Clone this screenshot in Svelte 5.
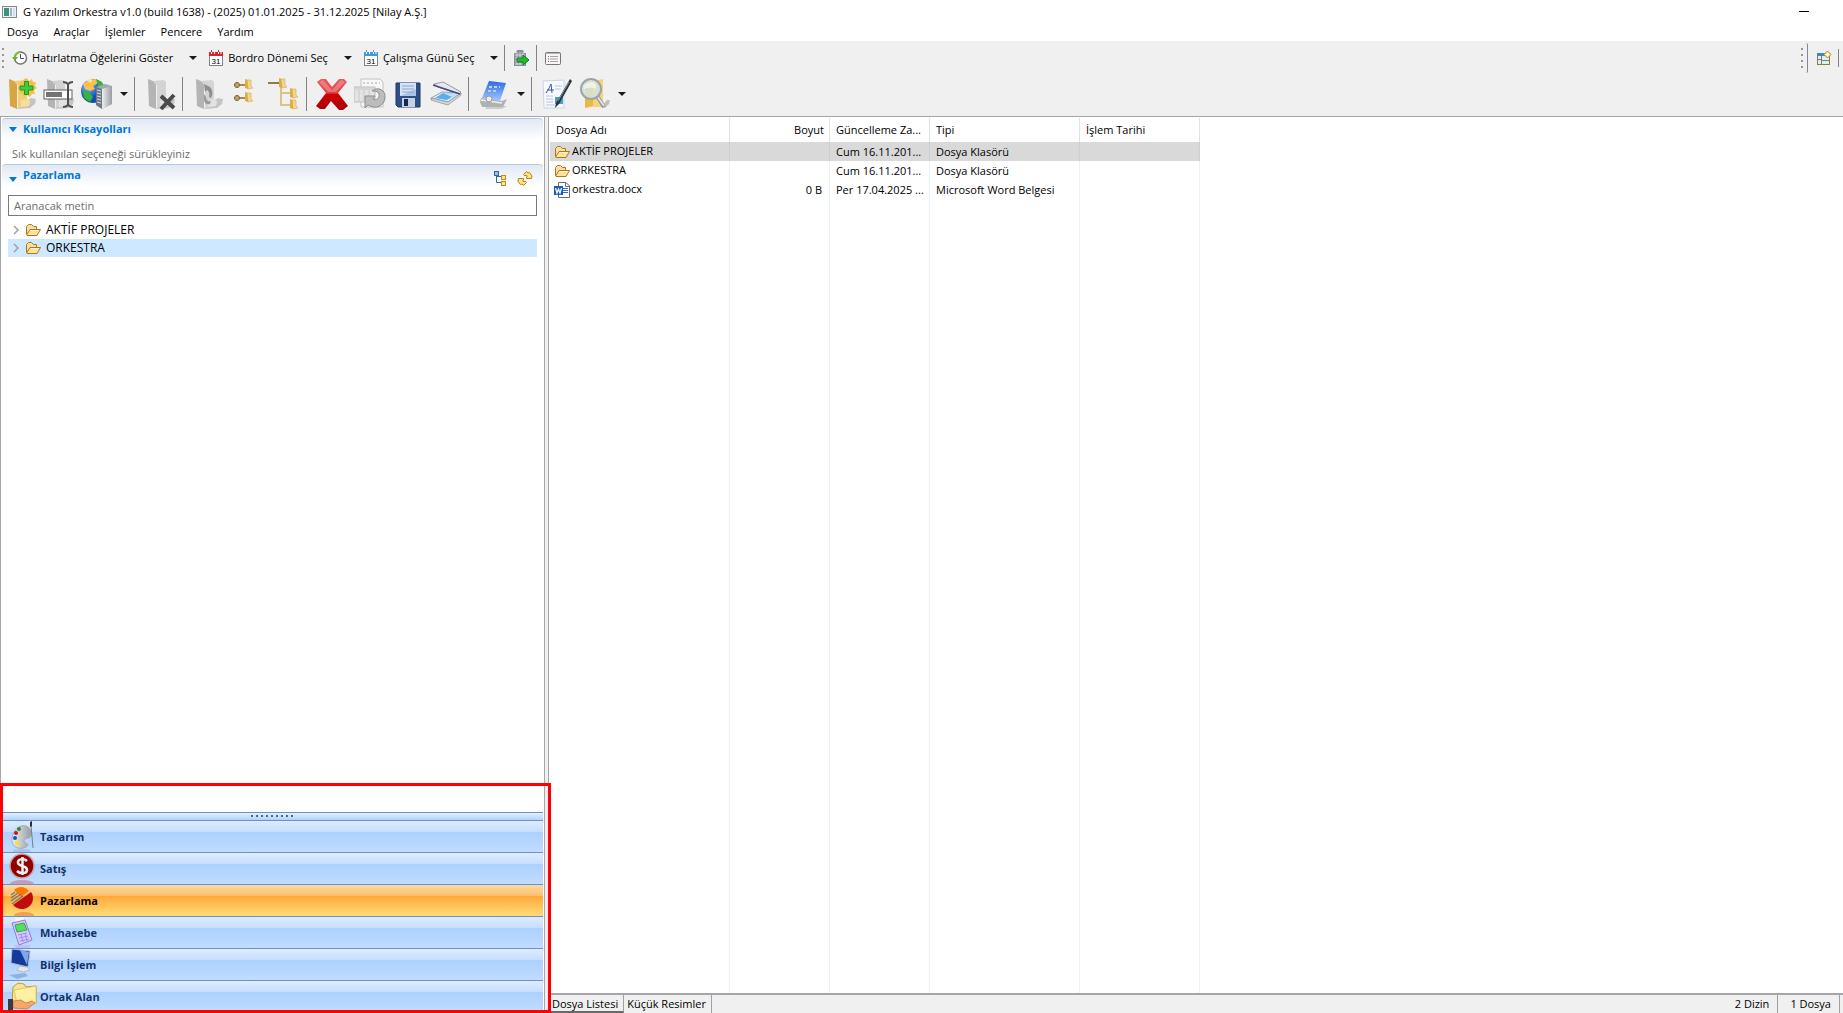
<script>
	let search = $state('')
	let activeModule = $state('Pazarlama')
	let activeTab = $state('Dosya Listesi')
	let selectedFile = $state('AKTİF PROJELER')
	let selectedFolder = $state('ORKESTRA')

	const menus = ['Dosya', 'Araçlar', 'İşlemler', 'Pencere', 'Yardım']

	const quickActions = [
		{ icon: 'clock', label: 'Hatırlatma Öğelerini Göster' },
		{ icon: 'calendarRed', label: 'Bordro Dönemi Seç' },
		{ icon: 'calendarBlue', label: 'Çalışma Günü Seç' }
	]

	// each inner list is one group, groups are split by a separator
	const tools = [
		[
			{ icon: 'folderNew', label: 'Yeni Klasör' },
			{ icon: 'rename', label: 'Yeniden Adlandır' },
			{ icon: 'server', label: 'Sunucu', drop: true }
		],
		[{ icon: 'folderDelete', label: 'Klasörü Sil' }],
		[
			{ icon: 'folderRefresh', label: 'Klasörü Yenile' },
			{ icon: 'collapse', label: 'Daralt' },
			{ icon: 'expand', label: 'Genişlet' }
		],
		[
			{ icon: 'remove', label: 'Sil' },
			{ icon: 'restore', label: 'Geri Al' },
			{ icon: 'save', label: 'Kaydet' },
			{ icon: 'scanner', label: 'Tara' }
		],
		[{ icon: 'drive', label: 'Sürücü', drop: true }],
		[
			{ icon: 'sign', label: 'İmzala' },
			{ icon: 'find', label: 'Ara', drop: true }
		]
	]

	const folders = ['AKTİF PROJELER', 'ORKESTRA']

	const files = [
		{ name: 'AKTİF PROJELER', size: '', updated: 'Cum 16.11.201...', type: 'Dosya Klasörü', icon: 'folder' },
		{ name: 'ORKESTRA', size: '', updated: 'Cum 16.11.201...', type: 'Dosya Klasörü', icon: 'folder' },
		{ name: 'orkestra.docx', size: '0 B', updated: 'Per 17.04.2025 ...', type: 'Microsoft Word Belgesi', icon: 'word' }
	]

	const modules = [
		{ name: 'Tasarım', icon: 'palette' },
		{ name: 'Satış', icon: 'dollar' },
		{ name: 'Pazarlama', icon: 'chart' },
		{ name: 'Muhasebe', icon: 'pos' },
		{ name: 'Bilgi İşlem', icon: 'monitor' },
		{ name: 'Ortak Alan', icon: 'share' }
	]

	const tabs = ['Dosya Listesi', 'Küçük Resimler']
</script>

{#snippet folderShape(side, face, flap)}
	<path d="M16 27L26 20L31 21L30 26L25 30L12 31Z" fill="#000" opacity=".18" />
	<path d="M9 3L20 2L22 4V21L25 23L24 28L12 30Z" fill={face} />
	<path d="M4 1L9 3L12 7V31L5 28Z" fill={side} />
	<path d="M16 23L21 21L25 23L24 28L16 29Z" fill={flap} />
	<path d="M12.500 7V30" stroke="#fff" stroke-opacity=".6" />
{/snippet}

{#snippet calendar(head)}
	<rect x="1.500" y="2.500" width="13" height="13" fill="#fff" stroke="#7c8288" />
	<path d="M1 2H15V6H1Z" fill={head} />
	<path d="M3.500 1V4M6.500 1V4M10.500 1V4M13 1V4" stroke="#fff" />
	<path d="M3.500 0V2M10.500 0V2" stroke={head} />
	<text x="8" y="14" text-anchor="middle">31</text>
{/snippet}

{#snippet smallFolder(x, y)}
	<path d="M{x} {y}L{x + 3} {y + 1}V{y + 10}L{x} {y + 9}Z" fill="#dcae48" />
	<path d="M{x + 2} {y + 1}H{x + 6}V{y + 7}L{x + 8} {y + 9}L{x + 3} {y + 10}Z" fill="#f4d687" stroke="#c9a04c" stroke-width=".5" />
{/snippet}

{#snippet icon(name, size = 16)}
	<svg class="icon" width={size} height={size} viewBox="0 0 {size} {size}" aria-hidden="true">
		{#if name === 'app'}
			<rect x=".5" y="2.500" width="14" height="11" fill="#eef4f4" stroke="#7e8a8e" />
			<path d="M2 4H7V12H2Z" fill="#3f8f7c" />
			<path d="M8 4H10V12H8Z" fill="#9bb5c9" />
			<path d="M11 4H13V12H11Z" fill="#d2dde6" />
		{:else if name === 'clock'}
			<circle cx="8.500" cy="8" r="6" fill="#fff" stroke="#73777a" stroke-width="1.500" />
			<path d="M8.500 4V8.500H12" fill="none" stroke="#4b4f52" />
			<path d="M3 9A6 6 0 0 1 8 2" fill="none" stroke="#7dba35" stroke-width="2" />
			<path d="M0 7H6L3 11Z" fill="#6fae2b" />
		{:else if name === 'calendarRed'}
			{@render calendar('#d8232a')}
		{:else if name === 'calendarBlue'}
			{@render calendar('#3c9ad8')}
		{:else if name === 'export'}
			<path d="M3 3L4 0H10L11 3H13V16H1V3Z" fill="#8a8d9c" />
			<path d="M2 5H12M2 8H12M2 11H12M2 14H12M4 2V15M7 2V15M10 2V15" stroke="#d4d6e0" />
			<path d="M4 8H10V5L16 10L10 15V12H4Z" fill="#21bd2a" stroke="#117c1a" />
		{:else if name === 'list'}
			<rect x=".5" y="2.500" width="15" height="12" rx="1" fill="#f6f6f6" stroke="#777" />
			<path d="M1 3.500H15" stroke="#b5b5b5" />
			<path d="M5 6.500H13M5 9H13M5 11.500H13" stroke="#a4a4a4" />
			<path d="M3 6.500H4" stroke="#2ba83a" />
			<path d="M3 9H4M3 11.500H4" stroke="#d22" />
		{:else if name === 'perspective'}
			<rect x="1.500" y="3.500" width="12" height="11" fill="#d9f0fa" stroke="#8a7c50" />
			<path d="M1 3H14V6H1Z" fill="#3f86c8" />
			<path d="M5.500 6V14M1 9.500H5M6 10.500H13" stroke="#8a7c50" />
			<path d="M11.500 1L15 4.500L11.500 8L8 4.500Z" fill="#fff0b8" stroke="#b88416" />
			<path d="M11.500 3V6M10 4.500H13" stroke="#fff" />
		{:else if name === 'folder'}
			<path d="M1.500 12.500V4.500L3.500 2.500H6.500L8.500 4.500H11.500V7.500" fill="#f8e0a2" stroke="#ae7624" />
			<path d="M1.500 13L5 7.500H15.500L12 13.500H2Z" fill="#ffe294" stroke="#ae7624" />
			<path d="M5.500 8.500H13.500" stroke="#fff6d5" />
		{:else if name === 'word'}
			<path d="M4.500 .5H12L15.500 4V15.500H4.500Z" fill="#fff" stroke="#6b6b6b" />
			<path d="M11.500 1V4.500H15" fill="none" stroke="#6b6b6b" />
			<path d="M9 6.500H14M9 8.500H14M9 10.500H14" stroke="#2b6cc4" />
			<path d="M0 4H9V13H0Z" fill="#185abd" />
			<path d="M1.500 6L3 11L4.500 7L6 11L7.500 6" fill="none" stroke="#fff" stroke-width="1.200" />
		{:else if name === 'tree'}
			<path d="M3.500 6V12.500H8M4 6.500H8" fill="none" stroke="#31699b" />
			<rect x="1.500" y="1.500" width="4" height="4" fill="#9bbbe0" stroke="#31699b" />
			<rect x="8.500" y="5.500" width="4" height="4" fill="#ffe48d" stroke="#bf8a18" />
			<rect x="8.500" y="11.500" width="4" height="4" fill="#ffe48d" stroke="#bf8a18" />
		{:else if name === 'sync'}
			<path d="M6.500 4.500L9.500 1.500L11 3L12.500 2.500L15 6L14.500 8.500H9.500V7L10.500 6L9 5L8 6Z" fill="#ffe28a" stroke="#b98212" />
			<path d="M9.500 12.500L6.500 15.500L5 14L3.500 14.500L1 11.500L1.500 8.500H6.500V10L5.500 11L7 12L8 11Z" fill="#ffe28a" stroke="#b98212" />
		{:else if name === 'folderNew'}
			{@render folderShape('#d7a545', '#f2cf7c', '#f8dda0')}
			<path d="M22 0L24 3L27 1L28 4L31 4L30 8L32 10L29 12L30 16L27 16L25 19L22 17L19 19L17 16L14 15L15 12L12 10L15 8L14 4L17 4L19 1Z" fill="#f4c24a" />
			<path d="M19.500 3.500H23.500V8H28V12H23.500V16.500H19.500V12H15V8H19.500Z" fill="#3ecb3c" stroke="#23962a" />
		{:else if name === 'rename'}
			{@render folderShape('#b4b4b4', '#d2d2d2', '#e2e2e2')}
			<rect x="1" y="12" width="28" height="9" fill="#fff" stroke="#5f5f5f" />
			<path d="M3 14H19V19H3Z" fill="#737373" />
			<path d="M20 4C23 4 24 5 25 6C26 5 27 4 30 4M25 6V27M20 29C23 29 24 28 25 27C26 28 27 29 30 29" fill="none" stroke="#4d5054" stroke-width="2" />
		{:else if name === 'server'}
			<circle cx="12" cy="13" r="12" fill="url(#globe)" />
			<path d="M2 6L8 2L15 1L17 5L12 8L14 11L9 13L4 11Z" fill="#ffc04c" />
			<path d="M15 1L21 4L23 9L17 8ZM2 13L8 14L12 19L9 24L3 20Z" fill="#39b23b" />
			<path d="M4 2L12 0L10 5Z" fill="#fff1be" opacity=".7" />
			<path d="M15 9L24 6L31 8V26L21 31L15 27Z" fill="#a3a8ad" />
			<path d="M15 9L21 11V31L15 27Z" fill="#6e7880" />
			<path d="M21 11L31 8V26L21 31Z" fill="url(#metal)" />
			<path d="M16 12L20 13M16 15L20 16M16 18L20 19M16 21L20 22M16 24L20 25" stroke="#d4e2ef" />
		{:else if name === 'folderDelete'}
			{@render folderShape('#b4b4b4', '#d4d4d4', '#e2e2e2')}
			<path d="M17 18L30 30M30 17L17 31" stroke="#4b4b4b" stroke-width="4" />
		{:else if name === 'folderRefresh'}
			{@render folderShape('#b4b4b4', '#d4d4d4', '#e2e2e2')}
			<path d="M12 6L18 9C21 12 21 17 19 20L17 19C18 16 17 13 15 12L13 14Z" fill="#8f8f8f" />
			<path d="M12 16L14 19C14 22 16 24 19 23L18 26C14 27 12 25 12 21Z" fill="#9b9b9b" />
		{:else if name === 'collapse'}
			<path d="M5 7H15M5 20H15" stroke="#a58c4a" stroke-width="2" />
			<path d="M4 7H10M7 4V10M4 20H10M7 17V23" stroke="#7d6c3a" stroke-width="3" />
			<path d="M5 7H9M7 5V9M5 20H9M7 18V22" stroke="#d8bd6a" />
			{@render smallFolder(15, 1)}
			{@render smallFolder(15, 14)}
		{:else if name === 'expand'}
			<path d="M0 5H11" stroke="#8f7b45" stroke-width="2" />
			<path d="M13 9V27H22M13 15H22" fill="none" stroke="#d8c389" stroke-width="2" />
			{@render smallFolder(11, 0)}
			{@render smallFolder(22, 10)}
			{@render smallFolder(22, 21)}
		{:else if name === 'remove'}
			<path d="M1 4L5 1H10L16 9L23 1H28L31 4L22 15L32 28L27 32H23L15 23L9 31H4L0 28L10 15Z" fill="url(#danger)" />
			<path d="M3 4L7 2L16 12L25 2L29 4L20 14H12Z" fill="#fff" opacity=".25" />
		{:else if name === 'restore'}
			<path d="M7 1H26L29 4V29H7Z" fill="#f7f7f7" stroke="#c2c2c2" />
			<path d="M9 5H26" stroke="#a9a9a9" stroke-dasharray="2 2" />
			<path d="M0 9H21V24H0Z" fill="#e3e3e3" stroke="#bbb" />
			<path d="M1 11H20M5 12V23M10 12V23M15 12V23" stroke="#c9c9c9" />
			<path d="M11 18H21L19 21C22 23 26 20 25 16C24 13 20 13 18 13C24 8 32 12 31 20C30 28 22 32 14 27L11 30Z" fill="#bcbcbc" stroke="#8e8e8e" />
		{:else if name === 'save'}
			<path d="M4 5H28V29H6L4 27Z" fill="#2c4f86" stroke="#1b3766" />
			<path d="M8 5H24V18H8Z" fill="#a9c4e9" />
			<path d="M8 5H24V11L8 18Z" fill="#d4e3f7" />
			<path d="M10 8H22M10 11H22M10 14H22" stroke="#8ba5cd" />
			<path d="M10 20H23V29H10Z" fill="#c5d1df" />
			<path d="M12 21H16V28H12Z" fill="#15294c" />
		{:else if name === 'scanner'}
			<path d="M1 20L12 14L31 15L18 24Z" fill="#e4ebf1" stroke="#87919b" stroke-width=".8" />
			<path d="M5 20L13 15L27 16L17 22Z" fill="#56aff0" />
			<path d="M13 15L27 16L22 19Z" fill="#bfe2fb" />
			<path d="M1 20L18 24L31 15V17L18 27L1 22Z" fill="#d4d8dc" stroke="#8d949b" stroke-width=".8" />
			<path d="M4 6L13 4L31 14L29 16L8 9Z" fill="#e5e8ed" stroke="#8184a0" stroke-width=".8" />
			<path d="M3 7L9 9L30 16" fill="none" stroke="#4c4780" stroke-width="1.500" />
		{:else if name === 'drive'}
			<path d="M9 28H29L24 31H7Z" fill="#999" opacity=".4" />
			<path d="M11 3L28 5L22 23L4 20Z" fill="url(#disk)" />
			<path d="M11 9H22M10 13H20" stroke="#b7d3ff" stroke-width="2" stroke-dasharray="3 2" />
			<path d="M3 20L24 23L29 21L25 29L4 29L2 24Z" fill="#afb1b3" />
			<path d="M3 22L24 25" stroke="#eee" stroke-width="1.500" />
			<circle cx="11" cy="21" r="3" fill="#eee" stroke="#999" />
		{:else if name === 'sign'}
			<path d="M2 3L23 2V30H3Z" fill="#f6f9ff" stroke="#cad4e5" />
			<path d="M5 15C8 11 9 8 10 6L11 15M6 12H13" fill="none" stroke="#3f50aa" />
			<path d="M14 8H21M14 11H20M5 18H12M5 21H12M5 24H12M5 27H14" stroke="#b9c3da" />
			<path d="M14 19H22V26H14Z" fill="#4aa1c5" />
			<path d="M29 1L31 3L18 26L14 30L15 25Z" fill="#2a3440" />
			<path d="M28 4L17 23" stroke="#8495a3" />
		{:else if name === 'find'}
			<path d="M22 29L28 22L31 22L30 26L26 30Z" fill="#000" opacity=".2" />
			<path d="M6 3H20V27L6 30Z" fill="#e9b948" />
			<path d="M14 3L24 1V24L27 27L24 29L14 29Z" fill="#f5d27c" />
			<path d="M18 18L25 29" stroke="#8d9399" stroke-width="4" />
			<path d="M18 18L25 28" stroke="#dfe3e7" stroke-width="2" />
			<circle cx="12" cy="11" r="10" fill="#d5e3d9" fill-opacity=".88" stroke="#9ba4aa" stroke-width="2" />
			<path d="M5 11C5 6 8 4 13 4C17 5 18 8 17 11C12 9 9 10 5 11Z" fill="#fff" opacity=".6" />
		{:else if name === 'palette'}
			<ellipse cx="14" cy="30" rx="9" ry="2" fill="#728bae" opacity=".3" />
			<path d="M18 5C11 3 5 10 4 17C3 24 9 29 15 27C20 26 22 23 17 22C14 19 18 17 21 17C25 15 24 7 18 5Z" fill="url(#metal)" stroke="#a5aaaf" />
			<circle cx="11" cy="8" r="2" fill="#258e39" />
			<circle cx="8" cy="12" r="2" fill="#c91722" />
			<circle cx="7" cy="17" r="2" fill="#1755b4" />
			<circle cx="9" cy="22" r="2" fill="#ffe400" />
			<path d="M23 4L25 27" stroke="#777f88" />
			<path d="M22 1L24 0V5L22 6Z" fill="#2b2d30" />
		{:else if name === 'dollar'}
			<ellipse cx="14" cy="31" rx="12" ry="4" fill="#ca4f6a" opacity=".45" />
			<circle cx="14" cy="13" r="12" fill="#920000" stroke="#c2a6a9" stroke-width="1.500" />
			<path d="M19 8C16 5 9 6 10 10C11 14 19 12 19 17C19 21 12 21 9 18M14.500 4V22" fill="none" stroke="#eee" stroke-width="2.500" />
		{:else if name === 'chart'}
			<ellipse cx="16" cy="30" rx="10" ry="3" fill="#e46b35" opacity=".5" />
			<path d="M6 5C10 1 17 1 21 6L13 12Z" fill="#ff7900" />
			<path d="M23 7C28 14 23 24 14 24C10 24 7 22 5 20Z" fill="#c00c0c" />
			<path d="M3 10L7 7M3 13L10 8M3 16L13 9M4 19L15 11" stroke="#777" stroke-width="1.500" />
		{:else if name === 'pos'}
			<path d="M6 28H23L21 32H9Z" fill="#b991e6" opacity=".35" />
			<path d="M7 1L16 0V6H8Z" fill="#f6f7ff" />
			<path d="M4 6L17 3L24 23L11 28Z" fill="#d4c9ff" stroke="#8d7ee0" />
			<path d="M7 8L16 6L19 13L9 15Z" fill="#59dc61" stroke="#3aa547" />
			<path d="M10 18L19 16M11 21L20 19M12 24L21 22M13 17L15 25M17 16L19 24" stroke="#9e8ee0" />
		{:else if name === 'monitor'}
			<path d="M1 26L17 24L20 27L9 30Z" fill="#7096d0" opacity=".6" />
			<path d="M4 0L22 2L20 18L3 14Z" fill="#153a9b" stroke="#a9bbd8" />
			<path d="M12 1L21 3L19 16Z" fill="#7fa5ec" />
			<path d="M11 17L19 18L22 21L15 23L9 21Z" fill="#e3e7ed" stroke="#b4bac5" />
		{:else if name === 'share'}
			<path d="M5 6L10 2L16 3L18 6L28 5V22L10 24L4 21Z" fill="#f7e58d" stroke="#bf9a38" />
			<path d="M6 9L28 5V22L9 23Z" fill="#fff1a4" stroke="#d6b64d" stroke-width=".7" />
			<path d="M5 20L13 19L18 22L24 20L27 22L19 28L5 27Z" fill="#f4a769" stroke="#bb713b" stroke-width=".7" />
			<path d="M0 18H5V29H0Z" fill="#393a42" />
		{/if}
	</svg>
{/snippet}

<svg class="defs" width="0" height="0" aria-hidden="true">
	<defs>
		<radialGradient id="globe" cx=".3" cy=".3">
			<stop offset="0" stop-color="#6dc8ff" />
			<stop offset="1" stop-color="#144fb0" />
		</radialGradient>
		<linearGradient id="metal" x2="1">
			<stop offset="0" stop-color="#eceeef" />
			<stop offset="1" stop-color="#989da2" />
		</linearGradient>
		<linearGradient id="danger" x2="0" y2="1">
			<stop offset="0" stop-color="#ec5a5f" />
			<stop offset=".45" stop-color="#e03d42" />
			<stop offset=".5" stop-color="#d00006" />
			<stop offset="1" stop-color="#a90005" />
		</linearGradient>
		<linearGradient id="disk" x2="0" y2="1">
			<stop offset="0" stop-color="#2e6be0" />
			<stop offset="1" stop-color="#a4c8ff" />
		</linearGradient>
	</defs>
</svg>

<div class="window">
	<header class="titlebar">
		{@render icon('app')}
		<span class="caption">G Yazılım Orkestra v1.0 (build 1638) - (2025) 01.01.2025 - 31.12.2025 [Nilay A.Ş.]</span>
		<button class="minimize" aria-label="Simge durumuna küçült"></button>
	</header>

	<nav class="menubar">
		{#each menus as menu}
			<button>{menu}</button>
		{/each}
	</nav>

	<div class="toolbars">
		<div class="quickbar">
			<span class="grip"></span>
			{#each quickActions as action}
				<button class="action">{@render icon(action.icon)}{action.label}</button>
				<button class="more" aria-label="{action.label} seçenekleri"><span class="caret"></span></button>
			{/each}
			<span class="rule first-rule"></span>
			<button class="small" aria-label="Dışa aktar">{@render icon('export')}</button>
			<span class="rule"></span>
			<button class="small" aria-label="Liste">{@render icon('list')}</button>
			<div class="perspectives">
				<span class="grip"></span>
				<span class="edge"></span>
				<button aria-label="Perspektif aç">{@render icon('perspective')}</button>
				<span class="rule short"></span>
			</div>
		</div>
		<div class="toolbar">
			{#each tools as group, i}
				{#if i > 0}<span class="rule"></span>{/if}
				{#each group as tool}
					<button class="tool" aria-label={tool.label}>{@render icon(tool.icon, 32)}</button>
					{#if tool.drop}
						<button class="drop" aria-label="{tool.label} seçenekleri"><span class="caret"></span></button>
					{/if}
				{/each}
			{/each}
		</div>
	</div>

	<main>
		<aside>
			<section>
				<h2><span class="twistie"></span>Kullanıcı Kısayolları</h2>
				<p>Sık kullanılan seçeneği sürükleyiniz</p>
			</section>
			<section class="browser">
				<h2>
					<span class="twistie low"></span>Pazarlama
					<span class="section-tools">
						<button aria-label="Ağaç görünümü">{@render icon('tree')}</button>
						<button aria-label="Eşitle">{@render icon('sync')}</button>
					</span>
				</h2>
				<input type="text" placeholder="Aranacak metin" aria-label="Aranacak metin" bind:value={search} />
				<ul>
					{#each folders as folder}
						<li>
							<button class:selected={folder === selectedFolder} onclick={() => (selectedFolder = folder)}>
								<svg width="8" height="10" viewBox="0 0 8 10" aria-hidden="true">
									<path d="M2 1L6 5L2 9" fill="none" stroke="#a0a0a0" stroke-width="1.500" />
								</svg>
								{@render icon('folder')}{folder}
							</button>
						</li>
					{/each}
				</ul>
			</section>

			<div class="modules">
				<div class="sash"><span></span></div>
				{#each modules as module}
					<button class:active={module.name === activeModule} onclick={() => (activeModule = module.name)}>
						{@render icon(module.icon, 32)}{module.name}
					</button>
				{/each}
				<div class="highlight"></div>
			</div>
		</aside>

		<div class="content">
			<div class="list">
				<table>
					<colgroup>
						<col class="c-name" /><col class="c-size" /><col class="c-date" /><col class="c-type" /><col class="c-done" />
					</colgroup>
					<thead>
						<tr>
							<th>Dosya Adı</th>
							<th class="num">Boyut</th>
							<th>Güncelleme Za...</th>
							<th>Tipi</th>
							<th>İşlem Tarihi</th>
						</tr>
					</thead>
					<tbody>
						{#each files as file}
							<tr class:selected={file.name === selectedFile} onclick={() => (selectedFile = file.name)}>
								<td class="name">{@render icon(file.icon)}{file.name}</td>
								<td class="num">{file.size}</td>
								<td>{file.updated}</td>
								<td>{file.type}</td>
								<td></td>
							</tr>
						{/each}
						<tr class="filler"><td></td><td></td><td></td><td></td><td></td></tr>
					</tbody>
				</table>
			</div>
			<footer>
				{#each tabs as tab}
					<button class="tab" class:current={tab === activeTab} onclick={() => (activeTab = tab)}>{tab}</button>
				{/each}
				<span class="status first">2 Dizin</span>
				<span class="status">1 Dosya</span>
			</footer>
		</div>
	</main>
</div>

<style>
	:global(body) {
		margin: 0;
		background: #fff;
	}
	.defs {
		position: absolute;
	}
	.window {
		display: flex;
		flex-direction: column;
		height: 100vh;
		overflow: hidden;
		color: #000;
		font: 11px/16px "Open Sans", "Noto Sans", sans-serif;
	}
	button {
		padding: 0;
		border: 0;
		color: inherit;
		font: inherit;
		background: none;
		white-space: nowrap;
	}
	.icon {
		display: block;
		flex: none;
	}
	.icon text {
		font: 8px "Liberation Sans", sans-serif;
	}

	.titlebar {
		display: flex;
		align-items: center;
		height: 23px;
		padding-left: 2px;
		gap: 5px;
	}
	.caption {
		flex: 1;
	}
	.minimize {
		width: 10px;
		height: 1px;
		margin-right: 34px;
		background: #000;
	}
	.menubar {
		display: flex;
		height: 18px;
		padding: 0 7px;
		gap: 15px;
		align-items: flex-end;
	}
	.menubar button {
		line-height: 18px;
	}

	.toolbars {
		background: #f0f0f0;
		border-bottom: 1px solid #a5a5ab;
	}
	.quickbar, .toolbar {
		display: flex;
		align-items: center;
	}
	.quickbar {
		height: 34px;
		padding-left: 2px;
	}
	.toolbar {
		height: 38px;
		padding: 0 2px 3px;
	}
	.grip {
		width: 2px;
		height: 20px;
		margin-right: 8px;
		background: repeating-linear-gradient(#97958c 0 2px, transparent 2px 6px);
	}
	.action {
		display: flex;
		align-items: center;
		gap: 4px;
	}
	.more {
		padding: 8px 11px 8px 16px;
	}
	.caret {
		display: block;
		width: 0;
		border: 4px solid transparent;
		border-top-color: #1a1a1a;
		border-bottom: 0;
	}
	.rule {
		flex: none;
		width: 1px;
		height: 34px;
		margin: 0 6px 0 3px;
		background: #838383;
	}
	.quickbar .rule {
		height: 26px;
		margin: 0 8px 0 0;
	}
	.quickbar .first-rule {
		margin-left: -5px;
	}
	.small {
		margin-right: 7px;
	}
	.perspectives {
		display: flex;
		align-items: center;
		margin-left: auto;
		padding-right: 4px;
	}
	.perspectives .grip {
		margin-right: 2px;
	}
	.edge {
		width: 2px;
		height: 30px;
		margin-right: 8px;
		border-right: 1px solid #83859a;
		border-radius: 0 2px 2px 0;
	}
	.quickbar .short {
		height: 18px;
		margin: 0 0 0 6px;
	}
	.tool {
		width: 38px;
		padding: 3px;
	}
	.drop {
		width: 15px;
		height: 32px;
		padding-left: 4px;
	}

	main {
		display: flex;
		flex: 1;
		min-height: 0;
		background: #f0f0f0;
	}
	aside {
		display: flex;
		flex-direction: column;
		flex: 0 1 545px;
		box-sizing: border-box;
		min-width: 280px;
		border: solid #a5a5ab;
		border-width: 0 1px;
		background: #fff;
	}
	section {
		padding: 0 6px;
		margin: 1px 1px 0;
		border-top: 1px solid #b4c8e0;
		border-radius: 4px 4px 0 0;
		background: linear-gradient(#e1e9f4, #fff 22px);
	}
	h2 {
		display: flex;
		align-items: center;
		margin: 0;
		height: 20px;
		color: #0078d7;
		font-size: 11px;
		font-weight: 700;
	}
	.twistie {
		border: 4px solid transparent;
		border-top: 5px solid #0078d7;
		border-bottom: 0;
		margin: 0 6px 0 1px;
	}
	.twistie.low {
		margin-top: 8px;
	}
	section p {
		margin: 0;
		padding: 7px 3px 2px 4px;
		color: #6d6d6d;
	}
	.browser {
		flex: 1;
		margin-top: 0;
		min-height: 0;
	}
	.section-tools {
		display: flex;
		gap: 8px;
		margin: 6px 4px 0 auto;
	}
	.browser input {
		width: 100%;
		height: 21px;
		box-sizing: border-box;
		margin: 10px 0 5px;
		padding: 0 5px;
		border: 1px solid #7a7a7a;
		color: #000;
		font: inherit;
		display: block;
	}
	.browser input::placeholder {
		color: #6d6d6d;
		opacity: 1;
	}
	ul {
		margin: 0;
		padding: 0;
		list-style: none;
	}
	li button {
		display: flex;
		align-items: center;
		width: 100%;
		height: 18px;
		padding-left: 4px;
		font-size: 12px;
		text-align: left;
	}
	li .icon {
		margin: 0 5px 0 5px;
	}
	li .selected {
		background: #cde8ff;
	}

	.modules {
		position: relative;
		flex: none;
		margin: 0 1px;
		padding-bottom: 1px;
		border-top: 1px solid #6593cf;
	}
	.sash {
		display: flex;
		justify-content: center;
		height: 7px;
		background: linear-gradient(#e3efff, #b1d2fc);
	}
	.sash span {
		width: 44px;
		height: 2px;
		margin-top: 2px;
		background: repeating-linear-gradient(90deg, #5a6478 0 2px, transparent 2px 5px);
	}
	.modules button {
		display: flex;
		align-items: center;
		width: 100%;
		height: 32px;
		padding-left: 6px;
		overflow: hidden;
		border-top: 1px solid #6593cf;
		color: #15306b;
		font-weight: 700;
		background: linear-gradient(#dfecff, #c6deff 34%, #add1ff 35%, #c0dbff);
	}
	.modules .active {
		color: #000;
		background: linear-gradient(#ffd9a3, #ffbf6d 34%, #ffa836 35%, #ffdb78);
	}
	.highlight {
		position: absolute;
		inset: -30px -8px 0 -2px;
		border: 3px solid #f00;
		pointer-events: none;
		z-index: 1;
	}

	.content {
		display: flex;
		flex: 1;
		flex-direction: column;
		min-width: 0;
		margin-left: 3px;
		border-left: 1px solid #a5a5ab;
	}
	.list {
		flex: 1;
		min-height: 0;
		padding: 1px 0 0 1px;
		overflow: hidden;
		background: #fff;
	}
	table {
		width: 650px;
		height: 100%;
		table-layout: fixed;
		border-collapse: separate;
		border-spacing: 0;
	}
	.c-name { width: 180px; }
	.c-size { width: 100px; }
	.c-date { width: 100px; }
	.c-type { width: 150px; }
	.c-done { width: 120px; }
	th, td {
		height: 19px;
		padding: 0 5px 0 6px;
		box-sizing: border-box;
		border-right: 1px solid #e9f1fb;
		font-weight: 400;
		text-align: left;
		white-space: nowrap;
	}
	th {
		height: 24px;
		border-color: #e2e2e2;
	}
	.num {
		text-align: right;
	}
	td.num {
		padding-right: 7px;
	}
	.name .icon {
		display: inline-block;
		margin-right: 2px;
		vertical-align: middle;
	}
	td.name {
		padding-left: 4px;
	}
	tr.selected {
		background: #d9d9d9;
	}
	tr.selected td {
		border-color: #c8d0d9;
	}
	.filler td {
		height: auto;
	}

	footer {
		display: flex;
		flex: none;
		height: 18px;
		border-top: 2px solid #a5a5ab;
		padding-right: 3px;
		line-height: 18px;
	}
	.tab {
		padding: 0 5px 0 3px;
		border-right: 1px solid #a0a0a0;
	}
	.tab.current {
		border-bottom: 2px solid #696969;
	}
	.status {
		padding: 0 8px 0 12px;
		border-right: 1px solid #a0a0a0;
	}
	.first {
		margin-left: auto;
	}
</style>
